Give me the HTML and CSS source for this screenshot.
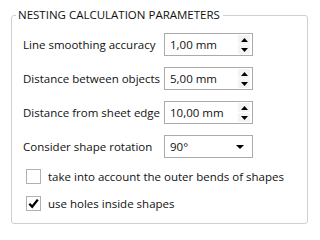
FILE: index.html
```html
<!DOCTYPE html>
<html>
<head>
<meta charset="utf-8">
<link rel="stylesheet" href="styles.css">
</head>
<body>
<fieldset class="group">
  <legend class="group-title">NESTING CALCULATION PARAMETERS</legend>
  <div class="params">
    <div class="label">Line smoothing accuracy</div>
    <div class="spin"><span class="value">1,00 mm</span><span class="spin-btns"><span class="btn"><svg width="7" height="4" viewBox="0 0 7 4"><polygon points="3.5,0 7,4 0,4" fill="#000"/></svg></span><span class="btn"><svg width="7" height="4" viewBox="0 0 7 4"><polygon points="0,0 7,0 3.5,4" fill="#000"/></svg></span></span></div>

    <div class="label">Distance between objects</div>
    <div class="spin"><span class="value">5,00 mm</span><span class="spin-btns"><span class="btn"><svg width="7" height="4" viewBox="0 0 7 4"><polygon points="3.5,0 7,4 0,4" fill="#000"/></svg></span><span class="btn"><svg width="7" height="4" viewBox="0 0 7 4"><polygon points="0,0 7,0 3.5,4" fill="#000"/></svg></span></span></div>

    <div class="label">Distance from sheet edge</div>
    <div class="spin"><span class="value">10,00 mm</span><span class="spin-btns"><span class="btn"><svg width="7" height="4" viewBox="0 0 7 4"><polygon points="3.5,0 7,4 0,4" fill="#000"/></svg></span><span class="btn"><svg width="7" height="4" viewBox="0 0 7 4"><polygon points="0,0 7,0 3.5,4" fill="#000"/></svg></span></span></div>

    <div class="label">Consider shape rotation</div>
    <div class="combo"><span class="value">90°</span><span class="combo-arrow"><svg width="8" height="4" viewBox="0 0 8 4"><polygon points="0,0 8,0 4,4" fill="#000"/></svg></span></div>
  </div>
  <div class="checks">
    <label class="check"><span class="box"></span><span class="check-text">take into account the outer bends of shapes</span></label>
    <label class="check"><span class="box checked"><svg width="13" height="13" viewBox="0 0 13 13"><path d="M2.3 6.8 L5.2 9.8 L10.8 2.6" fill="none" stroke="#000" stroke-width="2.3"/></svg></span><span class="check-text">use holes inside shapes</span></label>
  </div>
</fieldset>
</body>
</html>
```

FILE: styles.css
```css
html, body {
  margin: 0;
  padding: 0;
  background: #ffffff;
}
body {
  width: 316px;
  height: 233px;
  font-family: "Open Sans", "Noto Sans", sans-serif;
  font-size: 11.5px;
  color: #111111;
  overflow: hidden;
}
.group {
  margin: 7px 8px 0 11px;
  padding: 0 0 12px 0;
  border: 1px solid #d0d0d0;
  border-radius: 3px;
  min-width: 0;
}
.group-title {
  margin-left: 4px;
  padding: 0 3px 0 2px;
  line-height: 16px;
  font-size: 11.5px;
}
.params {
  display: grid;
  grid-template-columns: 141px 89px;
  grid-auto-rows: 23px;
  row-gap: 11px;
  padding: 10px 0 0 11px;
  align-items: center;
}
.label {
  line-height: 16px;
  white-space: nowrap;
}
.spin, .combo {
  height: 23px;
  box-sizing: border-box;
  border: 1px solid #ababab;
  display: flex;
  align-items: stretch;
  background: #fff;
}
.value {
  flex: 1;
  padding-left: 5px;
  line-height: 21px;
}
.spin-btns {
  display: flex;
  flex-direction: column;
  width: 12px;
  margin: 1px 2px 1px 0;
  gap: 1px;
}
.btn {
  flex: 1;
  display: flex;
  align-items: center;
  justify-content: center;
  background: #f4f4f4;
}
.btn svg { display: block; }
.combo-arrow {
  width: 16px;
  display: flex;
  align-items: center;
  justify-content: center;
  margin-right: 4px;
}
.checks {
  display: flex;
  flex-direction: column;
  gap: 12px;
  padding: 11px 0 0 14px;
}
.check {
  display: flex;
  align-items: center;
  gap: 7px;
  height: 15px;
  white-space: nowrap;
}
.box {
  width: 15px;
  height: 15px;
  box-sizing: border-box;
  border: 1px solid #b0b0b0;
  background: #fff;
  display: flex;
  align-items: center;
  justify-content: center;
}
.box svg { display: block; }
```
